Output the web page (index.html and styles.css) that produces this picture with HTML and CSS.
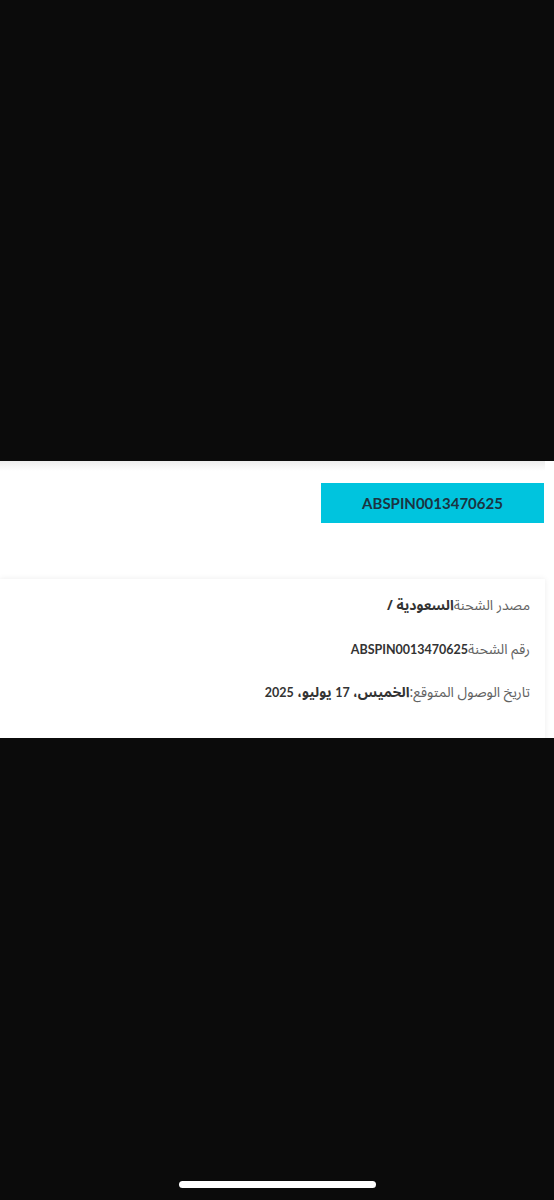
FILE: index.html
```html
<!DOCTYPE html>
<html lang="ar">
<head>
    <meta charset="UTF-8">
    <meta name="viewport" content="width=device-width, initial-scale=1.0">
    <title>تتبع الشحنة</title>
    <link rel="stylesheet" href="styles.css">
</head>
<body>
    <div class="dark-area"></div>
    <div class="screen">
        <div class="header-edge"></div>
        <div class="tracking-row">
            <div class="tracking-badge">ABSPIN0013470625</div>
        </div>
        <div class="details-card" dir="rtl">
            <p>مصدر الشحنة<b>السعودية /</b></p>
            <p>رقم الشحنة<b class="latin">ABSPIN0013470625</b></p>
            <p>تاريخ الوصول المتوقع:<b>الخميس، <span class="num">17</span> يوليو، <span class="num">2025</span></b></p>
        </div>
    </div>
    <div class="dark-area bottom">
        <div class="home-indicator"></div>
    </div>
</body>
</html>
```
FILE: styles.css
```css
body {
    margin: 0;
    background-color: #0b0b0b;
    font-family: "Noto Sans Arabic", "DejaVu Sans", Lato, sans-serif;
}
.dark-area {
    height: 461px;
    background-color: #0b0b0b;
}
.dark-area.bottom {
    height: 462px;
    display: flex;
    justify-content: center;
    align-items: flex-end;
    padding-bottom: 12px;
    box-sizing: border-box;
}
.home-indicator {
    width: 197px;
    height: 7px;
    border-radius: 4px;
    background: #fff;
}
.screen {
    background: #fff;
    height: 277px;
    overflow: hidden;
}
.header-edge {
    height: 10px;
    margin-right: 9px;
    background: linear-gradient(#ededed, #fafafa 70%, #fff);
}
.tracking-row {
    display: flex;
    justify-content: flex-end;
    padding: 12px 10px 0 0;
}
.tracking-badge {
    width: 223px;
    height: 40px;
    background: #00c4de;
    color: #1b3442;
    font-family: Lato, sans-serif;
    font-weight: 700;
    font-size: 15px;
    display: flex;
    align-items: center;
    justify-content: center;
}
.details-card {
    margin: 56px 9px 0 0;
    height: 200px;
    padding: 17px 15px 0 0;
    box-shadow: 0 0 6px rgba(0, 0, 0, 0.08);
    display: flex;
    flex-direction: column;
    gap: 23.5px;
}
.details-card p {
    margin: 0;
    font-size: 14px;
    line-height: 20px;
    color: #626262;
}
.details-card b {
    color: #333;
    font-weight: 700;
}
.details-card .latin,
.details-card .num {
    font-family: Lato, sans-serif;
    font-size: 12.5px;
}
```
